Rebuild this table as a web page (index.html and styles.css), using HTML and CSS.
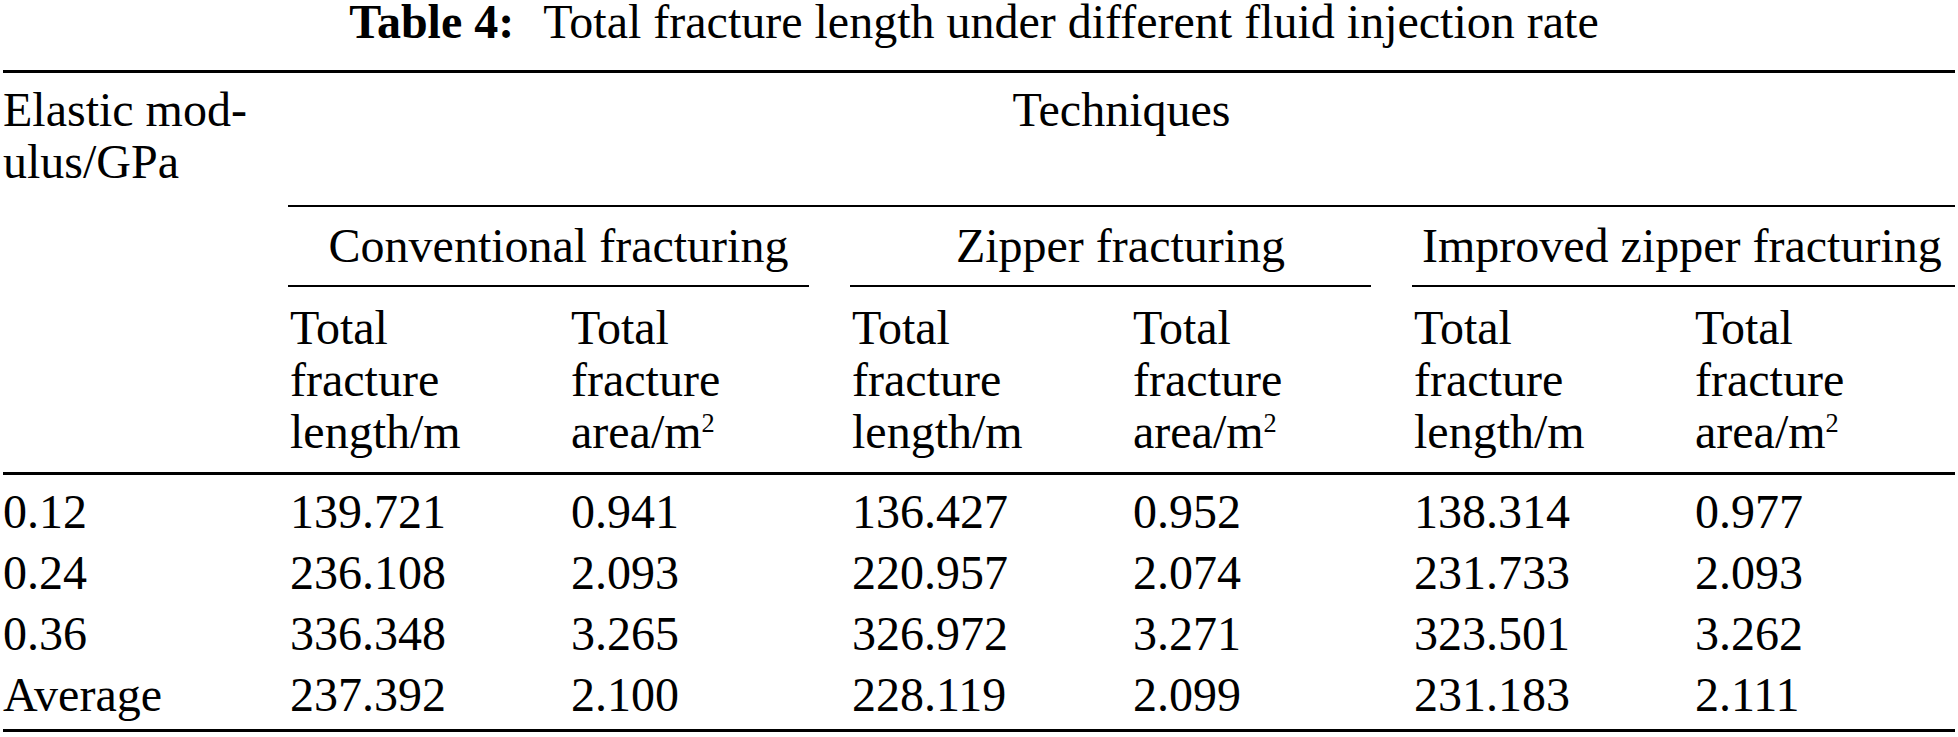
FILE: index.html
```html
<!DOCTYPE html>
<html lang="en">
<head>
<meta charset="utf-8">
<title>Table 4</title>
<link rel="stylesheet" href="styles.css">
</head>
<body>
<div class="page">
<div class="caption"><b class="label">Table 4:</b> Total fracture length under different fluid injection rate</div>
<table class="data">
  <colgroup>
    <col class="c-stub">
    <col class="c-num">
    <col class="c-num">
    <col class="c-num">
    <col class="c-num">
    <col class="c-num">
    <col class="c-last">
  </colgroup>
  <thead>
    <tr class="r-top">
      <th class="stub">Elastic mod-<br>ulus/GPa</th>
      <th class="tech" colspan="6">Techniques</th>
    </tr>
    <tr class="r-group">
      <th></th>
      <th colspan="2"><div class="cm trim">Conventional fracturing</div></th>
      <th colspan="2"><div class="cm trim">Zipper fracturing</div></th>
      <th colspan="2"><div class="cm last">Improved zipper fracturing</div></th>
    </tr>
    <tr class="r-sub">
      <th></th>
      <th>Total<br>fracture<br>length/m</th>
      <th>Total<br>fracture<br>area/m<sup>2</sup></th>
      <th>Total<br>fracture<br>length/m</th>
      <th>Total<br>fracture<br>area/m<sup>2</sup></th>
      <th>Total<br>fracture<br>length/m</th>
      <th>Total<br>fracture<br>area/m<sup>2</sup></th>
    </tr>
  </thead>
  <tbody>
    <tr><td>0.12</td><td>139.721</td><td>0.941</td><td>136.427</td><td>0.952</td><td>138.314</td><td>0.977</td></tr>
    <tr><td>0.24</td><td>236.108</td><td>2.093</td><td>220.957</td><td>2.074</td><td>231.733</td><td>2.093</td></tr>
    <tr><td>0.36</td><td>336.348</td><td>3.265</td><td>326.972</td><td>3.271</td><td>323.501</td><td>3.262</td></tr>
    <tr><td>Average</td><td>237.392</td><td>2.100</td><td>228.119</td><td>2.099</td><td>231.183</td><td>2.111</td></tr>
  </tbody>
</table>
</div>
</body>
</html>
```
FILE: styles.css
```css
body {
  margin: 0;
  background: #ffffff;
  color: #000000;
}

.page {
  font-family: "Liberation Serif", "Times New Roman", serif;
  font-size: 48px;
  padding: 0 3px;
}

.caption {
  height: 44px;
  line-height: 44px;
  text-align: center;
  margin-bottom: 26px;
  padding-right: 10px;
  white-space: nowrap;
}

.caption .label {
  margin-right: 18px;
}

.data {
  width: 1952px;
  table-layout: fixed;
  border-collapse: separate;
  border-spacing: 0;
  line-height: 52px;
  font-family: "Liberation Serif", "Times New Roman", serif;
  font-size: 48px;
}

.c-stub { width: 285px; }
.c-num { width: 281px; }
.c-last { width: 262px; }

.data th,
.data td {
  padding: 0 0 0 2px;
  text-align: left;
  vertical-align: top;
  font-weight: normal;
}

/* header row 1: stub + spanning "Techniques" */
.r-top th {
  border-top: 3px solid #000;
  padding-top: 11px;
  padding-bottom: 0;
}

.r-top .stub {
  padding-left: 0;
  padding-bottom: 19px;
}

.r-top .tech {
  text-align: center;
  padding-left: 0;
  border-bottom: 2px solid #000;
}

/* header row 2: technique groups with trimmed rules */
.r-group th {
  padding: 0;
}

.cm {
  padding: 13px 0 13px 20px;
  border-bottom: 2px solid #000;
  text-align: center;
  white-space: nowrap;
}

.cm.trim {
  margin-right: 41px;
}

.cm.last {
  text-align: left;
  padding-left: 10px;
}

/* header row 3: measured quantities */
.r-sub th {
  padding-top: 15px;
  padding-bottom: 14px;
  border-bottom: 3px solid #000;
}

.r-sub sup {
  font-size: 0.55em;
  line-height: 0;
  vertical-align: 0.62em;
}

/* body rows */
.data tbody td {
  padding-top: 4px;
  padding-bottom: 4px;
  line-height: 53px;
}

.data tbody td:first-child {
  padding-left: 0;
}

.data tbody tr:first-child td {
  padding-top: 10px;
}

.data tbody tr:last-child td {
  padding-bottom: 8px;
  border-bottom: 3px solid #000;
}
```
